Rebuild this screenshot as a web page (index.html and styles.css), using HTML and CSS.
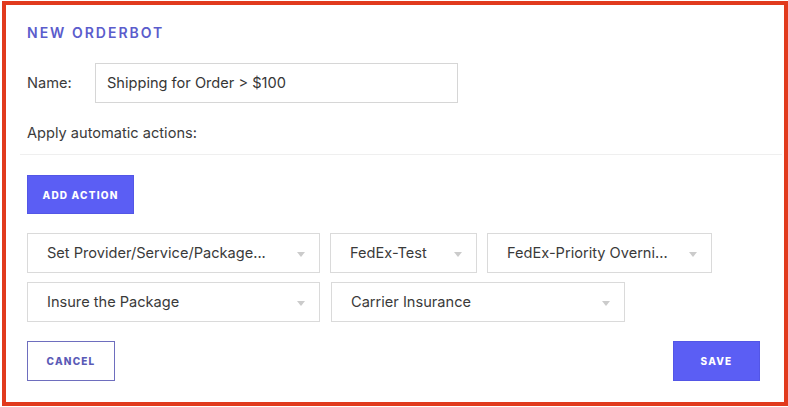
FILE: index.html
```html
<!DOCTYPE html>
<html>
<head>
<meta charset="utf-8">
<link rel="stylesheet" href="styles.css">
</head>
<body>
<div class="frame">
  <div class="content">
    <h1 class="title">NEW ORDERBOT</h1>
    <div class="name-row">
      <label class="label">Name:</label>
      <div class="input">Shipping for Order &gt; $100</div>
    </div>
    <div class="apply">Apply automatic actions:</div>
    <div class="divider"></div>
    <button class="btn btn-primary btn-add">ADD ACTION</button>
    <div class="rows">
      <div class="row">
        <div class="select w293"><span>Set Provider/Service/Package...</span><i class="caret"></i></div>
        <div class="select w147"><span>FedEx-Test</span><i class="caret"></i></div>
        <div class="select w225"><span>FedEx-Priority Overni...</span><i class="caret"></i></div>
      </div>
      <div class="row">
        <div class="select w293"><span>Insure the Package</span><i class="caret"></i></div>
        <div class="select w294 ml1"><span>Carrier Insurance</span><i class="caret"></i></div>
      </div>
    </div>
    <div class="footer">
      <button class="btn btn-outline">CANCEL</button>
      <button class="btn btn-primary btn-save">SAVE</button>
    </div>
  </div>
</div>
</body>
</html>
```

FILE: styles.css
```css
* { box-sizing: border-box; }
html, body { margin: 0; padding: 0; background: #ffffff; }
body {
  font-family: "Inter", "Liberation Sans", Arial, sans-serif;
  color: #3b3b3b;
}
.frame {
  margin: 1px 0 0 2px;
  width: 786px;
  height: 405px;
  border: 4px solid #e13a1d;
  background: #ffffff;
}
.content {
  padding: 20px 0 0 21px;
  display: flex;
  flex-direction: column;
  align-items: flex-start;
}
.title {
  margin: 0;
  font-size: 14px;
  line-height: 16px;
  font-weight: 600;
  letter-spacing: 2px;
  color: #5b5ccc;
}
.name-row {
  margin-top: 22px;
  display: flex;
  align-items: center;
}
.label {
  font-size: 14.6px;
  width: 68px;
}
.input {
  width: 363px;
  height: 40px;
  border: 1px solid #d6d6d6;
  padding-left: 11px;
  display: flex;
  align-items: center;
  font-size: 14.6px;
  color: #363636;
}
.apply {
  margin-top: 20px;
  font-size: 14.6px;
  line-height: 20px;
}
.divider {
  margin-top: 11px;
  margin-left: -7px;
  width: 762px;
  height: 1px;
  background: #efefef;
}
.btn {
  font-family: "Inter", "Liberation Sans", sans-serif;
  font-weight: 800;
  font-size: 10px;
  letter-spacing: 1.2px;
  height: 40px;
  padding: 0;
  cursor: pointer;
}
.btn-primary {
  background: #5b5ef4;
  color: #ffffff;
  border: 1px solid #5356e6;
}
.btn-add {
  margin-top: 20px;
  width: 107px;
  height: 39px;
}
.rows {
  margin-top: 19px;
  display: flex;
  flex-direction: column;
  gap: 9px;
}
.row {
  display: flex;
  gap: 10px;
}
.select {
  position: relative;
  height: 40px;
  border: 1px solid #dadada;
  padding-left: 19px;
  display: flex;
  align-items: center;
  font-size: 14.6px;
  color: #3a3a3a;
}
.w293 { width: 293px; }
.w147 { width: 147px; }
.w225 { width: 225px; }
.w294 { width: 294px; }
.ml1 { margin-left: 1px; }
.caret {
  position: absolute;
  right: 14px;
  top: 18px;
  width: 0;
  height: 0;
  border-left: 4px solid transparent;
  border-right: 4px solid transparent;
  border-top: 5px solid #cbcbcb;
}
.footer {
  margin-top: 19px;
  width: 733px;
  display: flex;
  justify-content: space-between;
}
.btn-outline {
  width: 88px;
  background: #ffffff;
  color: #5a5ab6;
  border: 1px solid #6e6ebe;
}
.btn-save {
  width: 87px;
}
```
